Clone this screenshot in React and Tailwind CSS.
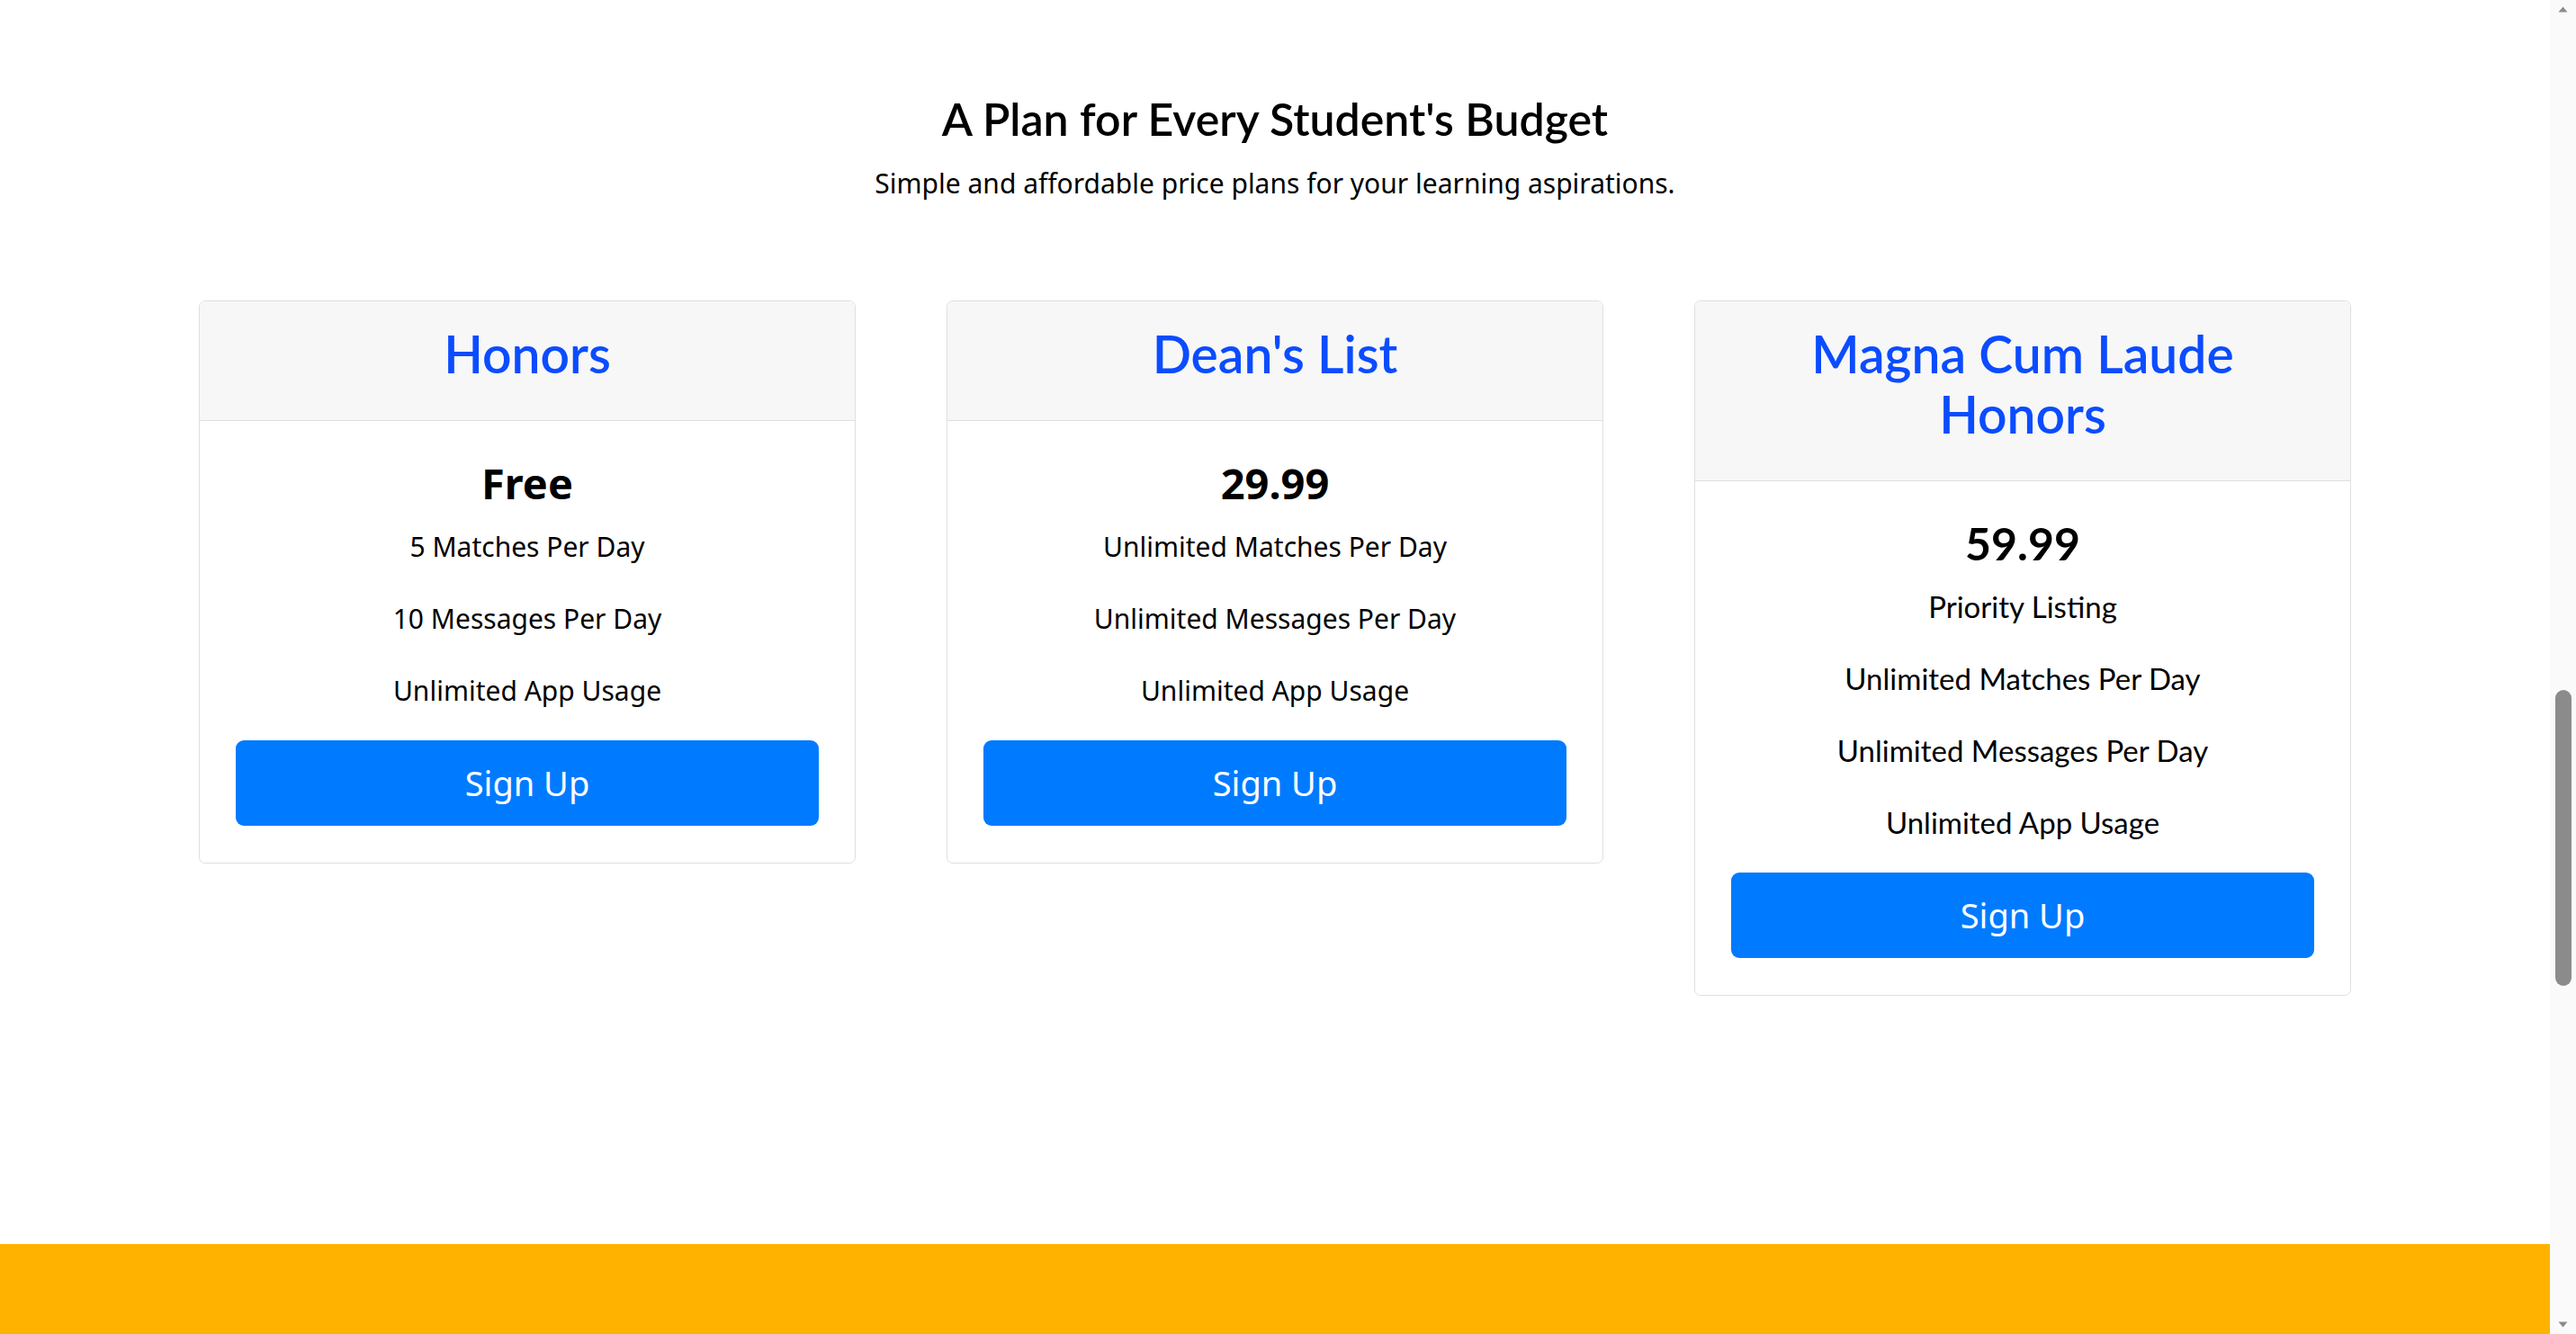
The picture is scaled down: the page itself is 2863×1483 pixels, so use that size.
import React from "react";

const plans = [
  {
    name: "Honors",
    price: "Free",
    features: ["5 Matches Per Day", "10 Messages Per Day", "Unlimited App Usage"],
    rounded: false,
  },
  {
    name: "Dean's List",
    price: "29.99",
    features: ["Unlimited Matches Per Day", "Unlimited Messages Per Day", "Unlimited App Usage"],
    rounded: false,
  },
  {
    name: "Magna Cum Laude\nHonors",
    price: "59.99",
    features: ["Priority Listing", "Unlimited Matches Per Day", "Unlimited Messages Per Day", "Unlimited App Usage"],
    rounded: true,
  },
];

function PlanCard({ plan }) {
  const bodyFont = plan.rounded
    ? "font-['Lato',sans-serif] text-[33px]"
    : "font-['Noto_Sans',sans-serif] text-[30px]";

  return (
    <div className="flex flex-col overflow-hidden rounded-[7px] border border-[#dfdfdf] bg-white">
      <div className="border-b border-[#dfdfdf] bg-[#f7f7f7] px-[35px] pt-[25px] pb-[26px] text-center">
        <h2 className="mb-[14px] whitespace-pre-line font-['Lato',sans-serif] text-[57px] leading-[67px] font-semibold text-[#0b4cff]">
          {plan.name}
        </h2>
      </div>
      <div className="px-[40px] pt-[40px] pb-[41px] text-center text-black">
        <h3
          className={`${plan.rounded ? "font-['Lato',sans-serif] text-[50px]" : "font-['Noto_Sans',sans-serif] text-[47px]"} leading-[58px] font-bold`}
        >
          {plan.price}
        </h3>
        <div className="mt-[18px]">
          {plan.features.map((f) => (
            <p key={f} className={`${bodyFont} mb-[33px] leading-[47px] last:mb-[32px]`}>
              {f}
            </p>
          ))}
        </div>
        <button className="h-[95px] w-full rounded-[9px] bg-[#007bff] font-['Noto_Sans',sans-serif] text-[38px] text-white">
          Sign Up
        </button>
      </div>
    </div>
  );
}

export default function App() {
  return (
    <div className="flex h-screen w-full overflow-hidden bg-white">
      <div className="flex min-w-0 flex-1 flex-col">
        <main className="flex-1 pt-[103px]">
          <div className="text-center">
            <h1 className="font-['Lato',sans-serif] text-[50px] leading-[59px] font-semibold text-black">
              A Plan for Every Student's Budget
            </h1>
            <p className="mt-[21px] font-['Noto_Sans',sans-serif] text-[30px] leading-[42px] text-black">
              Simple and affordable price plans for your learning aspirations.
            </p>
          </div>
          <div className="mx-auto mt-[109px] grid w-[2392px] grid-cols-3 items-start gap-x-[101px]">
            {plans.map((p) => (
              <PlanCard key={p.name} plan={p} />
            ))}
          </div>
        </main>
        <footer className="h-[100px] shrink-0 bg-[#ffb300]" />
      </div>

      {/* scrollbar */}
      <div className="relative w-[29px] shrink-0 bg-[#fafafa]">
        <svg className="absolute left-[9px] top-[7px]" width="11" height="7" viewBox="0 0 11 7">
          <path d="M5.5 0.5 L10.5 6.5 L0.5 6.5 Z" fill="#8b8b8b" />
        </svg>
        <div className="absolute left-[6px] top-[767px] h-[329px] w-[18px] rounded-full bg-[#8b8b8b]" />
        <svg className="absolute left-[9px] bottom-[7px]" width="11" height="7" viewBox="0 0 11 7">
          <path d="M0.5 0.5 L10.5 0.5 L5.5 6.5 Z" fill="#8b8b8b" />
        </svg>
      </div>
    </div>
  );
}
